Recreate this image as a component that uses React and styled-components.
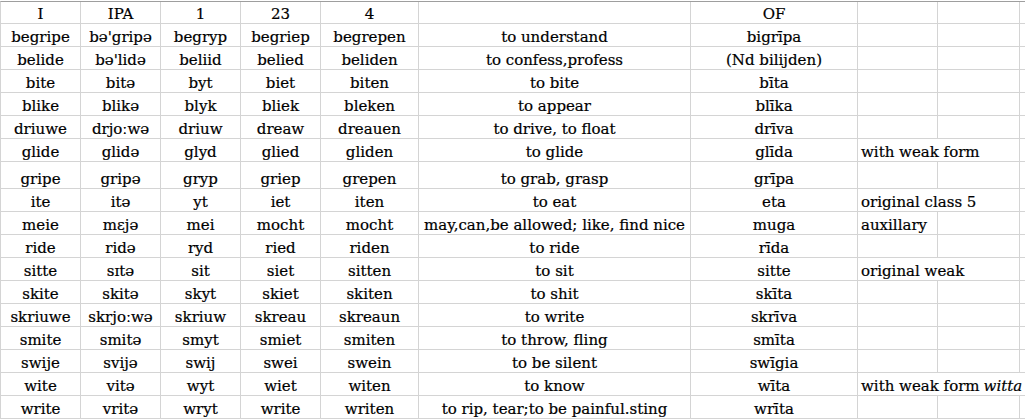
import React from 'react';
import styled, { createGlobalStyle } from 'styled-components';

const GlobalStyle = createGlobalStyle`
  html, body {
    margin: 0;
    padding: 0;
    background: #ffffff;
    overflow: hidden;
  }
`;

const Sheet = styled.div`
  display: grid;
  grid-template-columns: 80px 80px 80px 80px 98px 272px 167px 80px 82px 1fr;
  grid-template-rows: 22px repeat(6, 23px) 27px repeat(10, 23px);
  margin-top: 1px;
  border-top: 1px solid #9e9e9e;
  border-left: 1px solid #d4d4d4;
  width: 1040px;
  font-family: 'DejaVu Serif', serif;
  font-size: 15px;
  color: #000000;
  -webkit-text-stroke: 0.2px #000000;
`;

const Cell = styled.div`
  display: flex;
  align-items: flex-end;
  justify-content: ${(props) => (props.$left ? 'flex-start' : 'center')};
  grid-column: span ${(props) => props.$span || 1};
  padding: 0 ${(props) => (props.$left ? '3px' : '0')};
  border-right: 1px solid #d4d4d4;
  border-bottom: 1px solid #d4d4d4;
  line-height: 18px;
  white-space: nowrap;
  overflow: visible;
  min-width: 0;
`;

const Em = styled.i`
  font-style: italic;
  margin-left: 4px;
`;

const header = ['I', 'IPA', '1', '23', '4', '', 'OF'];

const rows = [
  ['begripe', "bə'gripə", 'begryp', 'begriep', 'begrepen', 'to understand', 'bigrīpa'],
  ['belide', "bə'lidə", 'beliid', 'belied', 'beliden', 'to confess,profess', '(Nd bilijden)'],
  ['bite', 'bitə', 'byt', 'biet', 'biten', 'to bite', 'bīta'],
  ['blike', 'blikə', 'blyk', 'bliek', 'bleken', 'to appear', 'blīka'],
  ['driuwe', 'drjoːwə', 'driuw', 'dreaw', 'dreauen', 'to drive, to float', 'drīva'],
  ['glide', 'glidə', 'glyd', 'glied', 'gliden', 'to glide', 'glīda', { text: 'with weak form', span: 2 }],
  ['gripe', 'gripə', 'gryp', 'griep', 'grepen', 'to grab, grasp', 'grīpa'],
  ['ite', 'itə', 'yt', 'iet', 'iten', 'to eat', 'eta', { text: 'original class 5', span: 2 }],
  ['meie', 'mɛjə', 'mei', 'mocht', 'mocht', 'may,can,be allowed; like, find nice', 'muga', { text: 'auxillary', span: 1 }],
  ['ride', 'ridə', 'ryd', 'ried', 'riden', 'to ride', 'rīda'],
  ['sitte', 'sɪtə', 'sit', 'siet', 'sitten', 'to sit', 'sitte', { text: 'original weak', span: 2 }],
  ['skite', 'skitə', 'skyt', 'skiet', 'skiten', 'to shit', 'skīta'],
  ['skriuwe', 'skrjoːwə', 'skriuw', 'skreau', 'skreaun', 'to write', 'skrīva'],
  ['smite', 'smitə', 'smyt', 'smiet', 'smiten', 'to throw, fling', 'smīta'],
  ['swije', 'svijə', 'swij', 'swei', 'swein', 'to be silent', 'swīgia'],
  ['wite', 'vitə', 'wyt', 'wiet', 'witen', 'to know', 'wīta', { text: 'with weak form', italic: 'witta', span: 3 }],
  ['write', 'vritə', 'wryt', 'write', 'writen', 'to rip, tear;to be painful.sting', 'wrīta'],
];

function Row({ values, note }) {
  const span = note ? note.span : 0;
  const blanks = Array.from({ length: 3 - span });
  return (
    <>
      {values.map((v, i) => (
        <Cell key={i}>{v}</Cell>
      ))}
      {note && (
        <Cell $left $span={note.span}>
          {note.text}
          {note.italic && <Em>{note.italic}</Em>}
        </Cell>
      )}
      {blanks.map((_, i) => (
        <Cell key={'b' + i} />
      ))}
    </>
  );
}

export default function App() {
  return (
    <>
      <GlobalStyle />
      <Sheet>
        <Row values={header} />
        {rows.map((r, i) => (
          <Row key={i} values={r.slice(0, 7)} note={r[7]} />
        ))}
      </Sheet>
    </>
  );
}
